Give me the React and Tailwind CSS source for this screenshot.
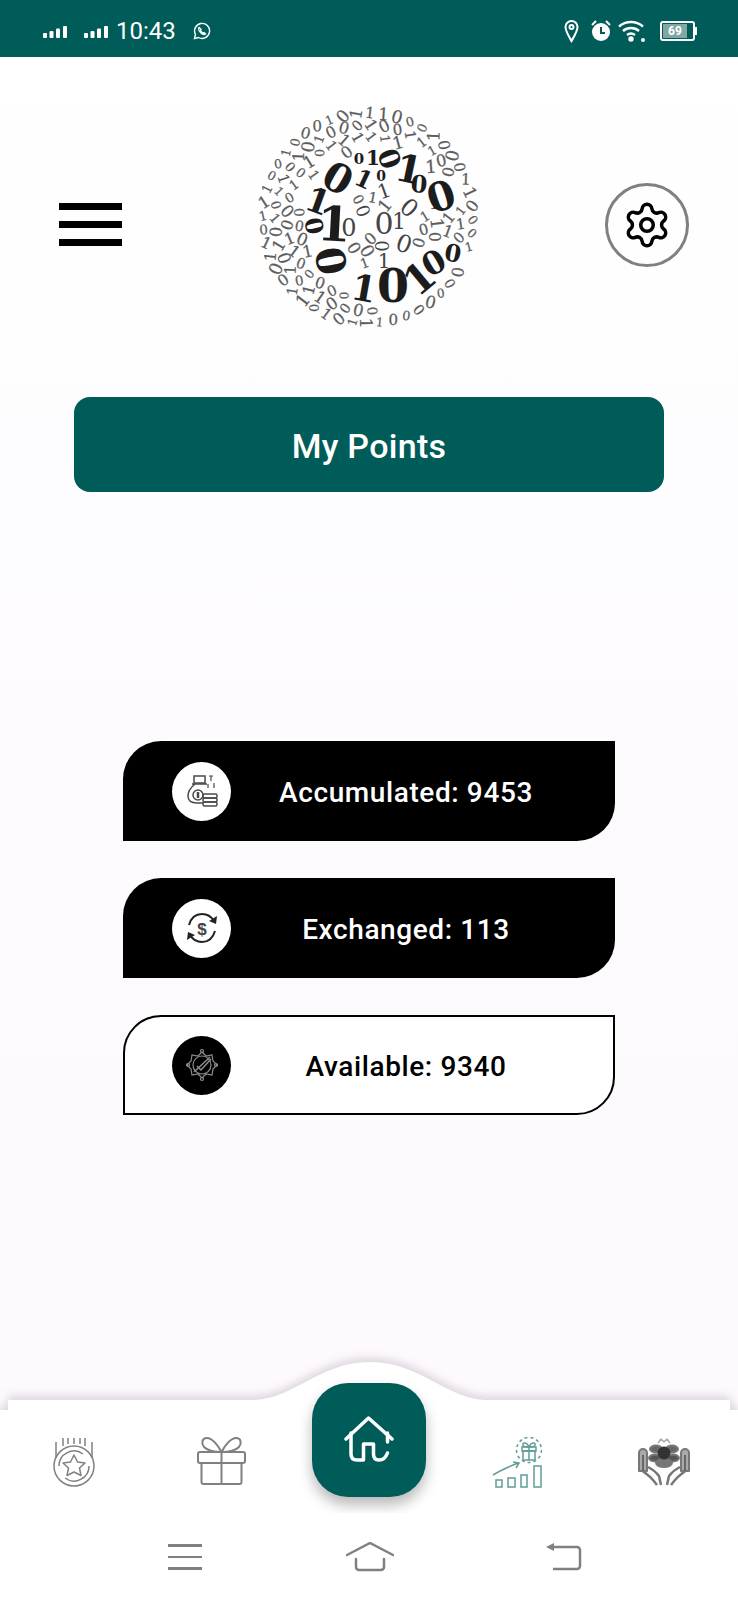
import React from "react";
import { Settings } from "lucide-react";

// logo: big bold digits placed by hand, the rest filled in on rings around them
const bigDigits = [
  ["0", 82, 72, 30, 40], ["1", 62, 95, 20, 34], ["1", 78, 118, 3, 48], ["0", 58, 120, 78, 24],
  ["0", 75, 155, 80, 40], ["0", 137, 180, 0, 46], ["1", 108, 182, 10, 36], ["1", 163, 172, -40, 40],
  ["0", 178, 157, -30, 32], ["0", 197, 147, 10, 24], ["0", 185, 90, -18, 40], ["1", 153, 63, 12, 38],
  ["0", 163, 78, 5, 24], ["0", 133, 53, 70, 28], ["1", 117, 52, 0, 20], ["1", 108, 73, 25, 24],
  ["0", 125, 70, 0, 14], ["0", 103, 53, 0, 15],
];
const midDigits = [
  ["0", 128, 117, 0, 30], ["0", 93, 122, 0, 24], ["0", 153, 102, 40, 24], ["0", 148, 138, 20, 24],
  ["1", 178, 97, 0, 16], ["1", 143, 115, 0, 22], ["1", 128, 85, -20, 20],
  ["0", 107, 105, 70, 18], ["1", 128, 155, 0, 20], ["0", 125, 140, 90, 18],
];

function buildSmallDigits() {
  const out = [];
  let seed = 17;
  const rnd = () => {
    seed = (seed * 16807) % 2147483647;
    return seed / 2147483647;
  };
  const placed = [...bigDigits, ...midDigits];
  for (let r = 105; r > 16; r -= 12) {
    const count = Math.floor((2 * Math.PI * r) / 13.5);
    for (let i = 0; i < count; i++) {
      const a = (i / count) * Math.PI * 2 + r;
      const x = 112 + Math.cos(a) * r;
      const y = 112 + Math.sin(a) * r;
      const hit = placed.some((d) => Math.hypot(d[1] - x, d[2] - y) < d[4] * 0.48 + 3);
      if (hit) continue;
      const v = rnd();
      out.push({ ch: v > 0.6 ? "1" : "0", x, y, rot: Math.round(rnd() * 180 - 90), size: 12 + rnd() * 6 });
    }
  }
  return out;
}
const smallDigits = buildSmallDigits();

function BinaryLogo() {
  return (
    <svg width="224" height="224" viewBox="0 0 224 224" className="overflow-visible font-['DejaVu_Serif',serif]">
      {smallDigits.map((d, i) => (
        <text key={i} x={d.x} y={d.y} fontSize={d.size} fill="#5c5c5c" stroke="#5c5c5c" strokeWidth="0.25" textAnchor="middle" dominantBaseline="central" transform={`rotate(${d.rot} ${d.x} ${d.y})`}>
          {d.ch}
        </text>
      ))}
      {midDigits.map(([ch, x, y, rot, size], i) => (
        <text key={i} x={x} y={y} fontSize={size} fill="#444" textAnchor="middle" dominantBaseline="central" transform={`rotate(${rot} ${x} ${y})`}>
          {ch}
        </text>
      ))}
      {bigDigits.map(([ch, x, y, rot, size], i) => (
        <text key={i} x={x} y={y} fontSize={size} fontWeight={700} fill="#1c1c1c" textAnchor="middle" dominantBaseline="central" transform={`rotate(${rot} ${x} ${y})`}>
          {ch}
        </text>
      ))}
    </svg>
  );
}

function Signal() {
  return (
    <svg width="24" height="12" viewBox="0 0 24 12" fill="#fff">
      <rect x="0" y="7" width="4" height="5" rx="1" />
      <rect x="6.500" y="5" width="4" height="7" rx="1" />
      <rect x="13" y="2.500" width="4" height="9.500" rx="1" />
      <rect x="20" y="0" width="4" height="12" rx="1" />
    </svg>
  );
}

function StatusIcons() {
  return (
    <div className="flex items-center">
      <svg width="15" height="24" viewBox="0 0 15 24" fill="none" stroke="#fff" strokeWidth="2" className="ml-[564px]">
        <path d="M7.500 22C4 16 1.500 12 1.500 8a6 6 0 0 1 12 0c0 4-2.500 8-6 14z" />
        <circle cx="7.500" cy="8" r="2" />
      </svg>
      <svg width="22" height="24" viewBox="0 0 22 24" className="ml-[11px]">
        <circle cx="11" cy="13" r="9" fill="#fff" />
        <path d="M11 8v6h4" fill="none" stroke="#005c59" strokeWidth="2" />
        <path d="M2 6l4-4M20 6l-4-4" stroke="#fff" strokeWidth="2" />
      </svg>
      <svg width="28" height="22" viewBox="0 0 28 22" fill="none" stroke="#fff" strokeWidth="2.400" className="ml-[6px]">
        <path d="M1 6.500c7-6 17-6 24 0" />
        <path d="M5 11c4.500-4 11.500-4 16 0" />
        <path d="M9 15c2.500-2 5.500-2 8 0" />
        <circle cx="13" cy="19" r="1.500" fill="#fff" />
        <circle cx="25" cy="20" r="0.800" fill="#fff" />
      </svg>
      <div className="ml-[14px] flex items-center">
        <div className="flex h-[20px] w-[35px] items-center rounded-[3px] border-2 border-white p-[1px]">
          <div className="flex h-full w-[24px] items-center justify-center bg-[#7fa8a6] text-[12px] font-bold leading-none text-white">69</div>
        </div>
        <div className="h-[8px] w-[2px] bg-white" />
      </div>
    </div>
  );
}

function StatusBar() {
  return (
    <div className="flex h-[57px] shrink-0 items-center bg-[#005c59] pl-[43px] pt-[4px] font-['Roboto',sans-serif] text-white">
      <div className="mt-[3px]">
        <Signal />
      </div>
      <div className="ml-[17px] mt-[3px]">
        <Signal />
      </div>
      <span className="ml-[8px] text-[24px] leading-none">10:43</span>
      <svg width="18" height="18" viewBox="0 0 18 18" fill="none" stroke="#fff" strokeWidth="1.400" className="ml-[17px]">
        <path d="M1.500 16.500l1-4a7.500 7.500 0 1 1 3 3z" />
        <path d="M6 5.500c-1 1 0 3.500 1.500 5s3.500 2.500 5 1.500l-1.500-1.500-1 .5c-1-.5-2-1.500-2.500-2.500l.5-1z" />
      </svg>
      <div className="absolute left-0 top-0 flex h-[57px] items-center pt-[4px]">
        <StatusIcons />
      </div>
    </div>
  );
}

function CoinBagIcon() {
  return (
    <svg width="34" height="34" viewBox="0 0 34 34" fill="none" stroke="#4a4a4a" strokeWidth="1.500">
      <rect x="9" y="2" width="11" height="7" />
      <path d="M7 10h15M10 10c-5 4-7 8-7 12 0 5 4 7 9 7h6" />
      <circle cx="13" cy="21" r="5" />
      <path d="M13 18v6" strokeWidth="2.500" />
      <rect x="18" y="20" width="14" height="4" rx="1.500" />
      <rect x="18" y="24" width="14" height="4" rx="1.500" />
      <rect x="18" y="28" width="14" height="4" rx="1.500" />
      <path d="M24 2h4M26 2v5M29 9v5M23 10v4" strokeWidth="1.200" />
    </svg>
  );
}

function ExchangeIcon() {
  return (
    <svg width="36" height="36" viewBox="0 0 36 36" fill="none" stroke="#222" strokeWidth="2">
      <path d="M5 15C7 8 12 4 18 4c5 0 9 2 12 7" />
      <path d="M31 21c-2 7-7 11-13 11-5 0-9-2-12-7" />
      <path d="M33 6l-1 8-7-3zM3 30l1-8 7 3z" fill="#222" stroke="none" />
      <text x="18" y="24.500" textAnchor="middle" fontSize="17" fontWeight="700" fill="#444" stroke="none" className="font-['Liberation_Sans',sans-serif]">$</text>
    </svg>
  );
}

function BadgeIcon() {
  return (
    <svg width="34" height="34" viewBox="0 0 34 34" fill="none" stroke="#8d8d8d" strokeWidth="1.200">
      <path d="M17 4l4 4 6-1 1 6 4 4-4 4-1 6-6-1-4 4-4-4-6 1-1-6-4-4 4-4 1-6 6 1z" />
      <circle cx="17" cy="17" r="9" />
      <path d="M9 24L25 9M12 18l4 4 10-11" strokeWidth="1.500" />
      <circle cx="17" cy="3" r="1.500" />
      <circle cx="17" cy="31" r="1.500" />
      <circle cx="3" cy="17" r="1.500" />
      <circle cx="31" cy="17" r="1.500" />
    </svg>
  );
}

function PointsRow({ label, dark, icon }) {
  return (
    <div
      className={
        dark
          ? "flex h-[100px] w-[492px] items-center rounded-tl-[38px] rounded-br-[38px] bg-black pl-[49px] pr-[34px] text-white"
          : "flex h-[100px] w-[492px] items-center rounded-tl-[38px] rounded-br-[38px] border-2 border-black bg-white pl-[47px] pr-[32px] text-black"
      }
    >
      <div className={dark ? "flex h-[59px] w-[59px] shrink-0 items-center justify-center rounded-full bg-white" : "flex h-[59px] w-[59px] shrink-0 items-center justify-center rounded-full bg-black"}>
        {icon}
      </div>
      <div className="flex-1 pt-[3px] text-center text-[28px] font-medium leading-none tracking-[0.6px]">{label}</div>
    </div>
  );
}

function MedalIcon() {
  return (
    <svg width="42" height="50" viewBox="0 0 42 50" fill="none" stroke="#808080" strokeWidth="1.500" strokeLinejoin="round">
      <circle cx="21" cy="29" r="20" />
      <path d="M6 29a15 15 0 0 1 24-12M36 29a15 15 0 0 1-24 12" />
      <path d="M21 18l3.500 7 7.500 1-5.500 5 1.500 7.500-7-3.500-7 3.500 1.500-7.500-5.500-5 7.500-1z" />
      <path d="M3 5v16M39 5v16M10 1v8M15 1v6M21 1v6M27 1v6M32 1v8" />
    </svg>
  );
}

function GiftIcon() {
  return (
    <svg width="49" height="49" viewBox="0 0 49 49" fill="none" stroke="#808080" strokeWidth="2" strokeLinejoin="round">
      <rect x="1" y="15" width="47" height="11" rx="2" />
      <path d="M4.500 26v19a2 2 0 0 0 2 2h36a2 2 0 0 0 2-2V26" />
      <path d="M24.500 15v32" />
      <path d="M24.500 15C21 8 15 1 10 1 5 1 4 6 7 10c3 3 10 5 17.500 5zM24.500 15C28 8 34 1 39 1c5 0 6 5 3 9-3 3-10 5-17.500 5z" />
    </svg>
  );
}

function GrowthIcon() {
  return (
    <svg width="50" height="51" viewBox="0 0 50 51" fill="none" stroke="#5f9c98" strokeWidth="1.500">
      <circle cx="37" cy="13" r="12.500" strokeDasharray="3 3" />
      <rect x="30" y="10" width="14" height="4" />
      <rect x="31" y="14" width="12" height="9" />
      <path d="M37 10v13M37 10c-2-5-7-5-6-2 0 2 3 2 6 2zM37 10c2-5 7-5 6-2 0 2-3 2-6 2z" />
      <path d="M1 38c8-5 15-8 25-12M21 25l6 1-3 5" />
      <rect x="4" y="43" width="6" height="7" />
      <rect x="16" y="41" width="7" height="9" />
      <rect x="29" y="38" width="6" height="12" />
      <rect x="42" y="29" width="7" height="21" />
    </svg>
  );
}

function HandsIcon() {
  return (
    <svg width="52" height="50" viewBox="0 0 52 50" fill="none" stroke="#777" strokeWidth="2" strokeLinejoin="round" className="blur-[0.5px]">
      <path d="M1 16a4 4 0 0 1 8 0v18H1zM43 16a4 4 0 0 1 8 0v18h-8z" fill="#aaa" />
      <path d="M5 18v16M47 18v16" stroke="#666" />
      <path d="M5 34c3 3 7 5 10 9l4 5M47 34c-3 3-7 5-10 9l-4 5" strokeWidth="2.500" />
      <path d="M10 30c4 2 8 5 11 9l2 9M42 30c-4 2-8 5-11 9l-2 9" strokeWidth="2.500" />
      <ellipse cx="18" cy="12" rx="6" ry="3.500" fill="#666" />
      <ellipse cx="34" cy="12" rx="6" ry="3.500" fill="#666" />
      <ellipse cx="17" cy="21" rx="6" ry="3.500" fill="#555" />
      <ellipse cx="35" cy="21" rx="6" ry="3.500" fill="#555" />
      <ellipse cx="26" cy="26" rx="8" ry="4" fill="#777" />
      <circle cx="26" cy="16" r="5.500" fill="#333" stroke="#333" />
      <path d="M20 6l3-4 3 3 3-3 3 4" strokeWidth="1.500" stroke="#aaa" />
    </svg>
  );
}

function HomeGlyph() {
  return (
    <svg width="50" height="48" viewBox="0 0 50 48" fill="none" stroke="#fff" strokeWidth="3.500" strokeLinecap="round" strokeLinejoin="round">
      <path d="M2 23L24.500 2 48 23" />
      <path d="M7 17v21q0 6 6 6h6.500V28h10v10q0 6 5.500 6 6 0 8.500-7M43.500 17v9" />
    </svg>
  );
}

function BottomNav() {
  return (
    <div className="relative h-[113px] shrink-0">
      <svg width="738" height="158" viewBox="0 0 738 158" className="absolute left-0 top-[-45px] drop-shadow-[0_-4px_5px_rgba(90,70,90,0.2)]">
        <path d="M8 45H255C295 43 320 7 370 7S445 43 485 45H730V55H738V158H0V55H8z" fill="#fff" />
      </svg>
      <div className="relative grid grid-cols-5 justify-items-center pt-[37px]">
        <MedalIcon />
        <GiftIcon />
        <div />
        <GrowthIcon />
        <HandsIcon />
      </div>
      <button className="absolute left-[312px] top-[-17px] flex h-[114px] w-[114px] items-center justify-center rounded-[36px] bg-[#005c59] shadow-[0_8px_14px_rgba(0,0,0,0.28)]">
        <HomeGlyph />
      </button>
    </div>
  );
}

function SystemNav() {
  return (
    <div className="relative flex h-[87px] shrink-0 items-start bg-white pl-[168px] pt-[29px]">
      <div className="mt-[2px] flex w-[34px] flex-col gap-[9px]">
        <div className="h-[2.500px] bg-[#808080]" />
        <div className="h-[2.500px] bg-[#808080]" />
        <div className="h-[2.500px] bg-[#808080]" />
      </div>
      <svg width="48" height="30" viewBox="0 0 48 30" fill="none" stroke="#808080" strokeWidth="2.500" strokeLinecap="round" className="ml-[144px]">
        <path d="M1 13L24 1l23 12" />
        <path d="M10 17v8a3 3 0 0 0 3 3h22a3 3 0 0 0 3-3v-8" />
      </svg>
      <svg width="36" height="30" viewBox="0 0 36 30" fill="none" stroke="#808080" strokeWidth="2.500" className="ml-[152px]">
        <path d="M8 5h23a3 3 0 0 1 3 3v16a3 3 0 0 1-3 3H7" />
        <path d="M0 5l8-4v8z" fill="#808080" stroke="none" />
      </svg>
    </div>
  );
}

export default function App() {
  return (
    <div className="relative flex h-[1600px] w-[738px] flex-col overflow-hidden bg-[#fdf9fd] font-['Roboto',sans-serif]">
      <StatusBar />

      <div className="flex flex-1 flex-col bg-linear-to-b from-white via-[#fdfbfe] to-[#fdf9fd]">
        <div className="flex items-center pl-[59px] pt-[49px]">
          <div className="mb-[2px] flex w-[63px] flex-col gap-[11px]">
            <div className="h-[7px] bg-black" />
            <div className="h-[7px] bg-black" />
            <div className="h-[7px] bg-black" />
          </div>
          <div className="mb-[14px] ml-[134px]">
            <BinaryLogo />
          </div>
          <div className="ml-[125px] flex h-[84px] w-[84px] items-center justify-center rounded-full border-[3px] border-[#808080]">
            <Settings size={50} strokeWidth={1.7} color="#000" />
          </div>
        </div>

        <div className="mx-[74px] mt-[53px] flex h-[95px] items-center justify-center rounded-[16px] bg-[#005c59] pt-[3px] text-[34px] font-medium tracking-[0.3px] text-white">
          My Points
        </div>

        <div className="ml-[123px] mt-[249px] flex flex-col gap-[37px]">
          <PointsRow dark label="Accumulated: 9453" icon={<CoinBagIcon />} />
          <PointsRow dark label="Exchanged: 113" icon={<ExchangeIcon />} />
          <PointsRow label="Available: 9340" icon={<BadgeIcon />} />
        </div>
      </div>

      <BottomNav />
      <SystemNav />
    </div>
  );
}
